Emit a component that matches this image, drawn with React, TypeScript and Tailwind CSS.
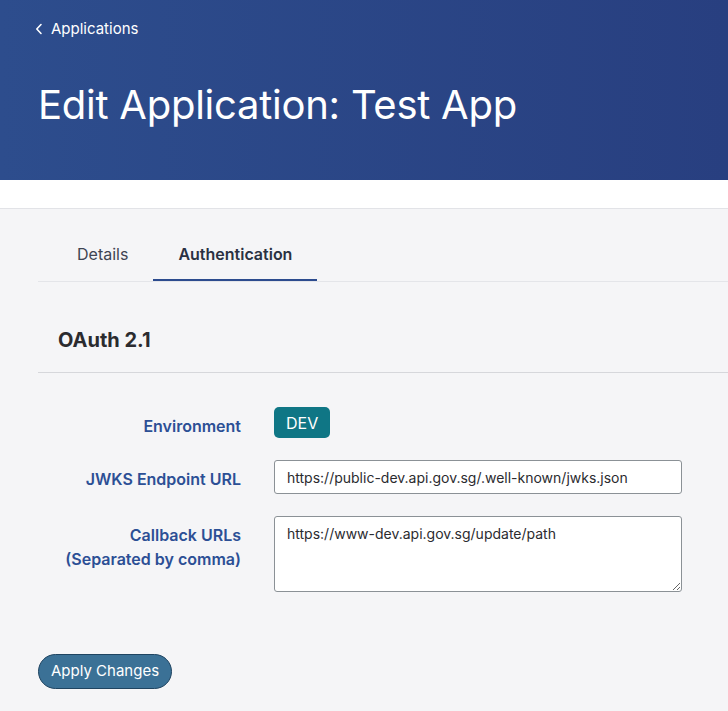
import React from "react";

export default function App() {
  return (
    <div className="min-h-screen bg-[#f5f5f7] font-['Inter',sans-serif]">
      {/* Header */}
      <header className="h-[180px] bg-gradient-to-r from-[#2d4d8d] to-[#283f80] px-[38px] pt-[18px] text-white">
        <a href="#" className="flex items-center gap-[8px] text-[15px] leading-[22px]">
          <svg width="8" height="12" viewBox="0 0 8 12" fill="none" className="ml-[-3px]">
            <path d="M6 1.5 1.8 6 6 10.5" stroke="white" strokeWidth="1.6" strokeLinecap="round" strokeLinejoin="round" />
          </svg>
          Applications
        </a>
        <h1 className="mt-[41px] text-[40px] leading-[48px] font-normal tracking-[-0.25px]">
          Edit Application: Test App
        </h1>
      </header>

      <div className="h-[29px] bg-white border-b border-[#e2e3e7]" />

      <main className="pl-[38px] pt-[24px]">
        {/* Tabs */}
        <div className="flex border-b border-[#e4e5e9] pl-[14px]">
          <button className="h-[48px] px-[25px] pt-[10px] pb-[16px] text-[16px] leading-[22px] text-[#3e4452]">
            Details
          </button>
          <button className="h-[48px] px-[25px] pt-[10px] pb-[14px] text-[16px] leading-[22px] font-semibold text-[#2a3142] border-b-2 border-[#2c4b8e] -mb-px">
            Authentication
          </button>
        </div>

        {/* Section header */}
        <div className="border-b border-[#d6d7db] pl-[20px] pt-[46px] pb-[20px]">
          <h2 className="text-[20px] leading-[24px] font-bold text-[#2b2b2f]">OAuth 2.1</h2>
        </div>

        {/* Form */}
        <div className="flex flex-col gap-[22px] pt-[34px]">
          <div className="flex gap-[33px]">
            <label className="w-[203px] pt-[7px] text-right text-[16px] leading-6 font-semibold text-[#2c4f95]">
              Environment
            </label>
            <span className="flex h-[31px] items-center rounded-[5px] bg-[#0f7685] px-[12px] text-[16px] text-white">
              DEV
            </span>
          </div>

          <div className="flex gap-[33px]">
            <label className="w-[203px] pt-[7px] text-right text-[16px] leading-6 font-semibold text-[#2c4f95]">
              JWKS Endpoint URL
            </label>
            <input
              defaultValue="https://public-dev.api.gov.sg/.well-known/jwks.json"
              className="h-[34px] w-[408px] rounded-[3px] border border-[#8b9196] bg-white px-[12px] text-[14px] text-[#2b2b2f] outline-none"
            />
          </div>

          <div className="flex gap-[33px]">
            <label className="w-[203px] pt-[7px] text-right text-[16px] leading-6 font-semibold text-[#2c4f95]">
              Callback URLs
              <br />
              (Separated by comma)
            </label>
            <textarea
              defaultValue="https://www-dev.api.gov.sg/update/path"
              className="h-[76px] w-[408px] rounded-[3px] border border-[#8b9196] bg-white px-[12px] pt-[7px] text-[14px] leading-[20px] text-[#2b2b2f] outline-none"
            />
          </div>
        </div>

        <button className="mt-[62px] h-[35px] rounded-full border border-[#1f4461] bg-[#3b7196] px-[12px] text-[15px] text-white">
          Apply Changes
        </button>
      </main>
    </div>
  );
}
